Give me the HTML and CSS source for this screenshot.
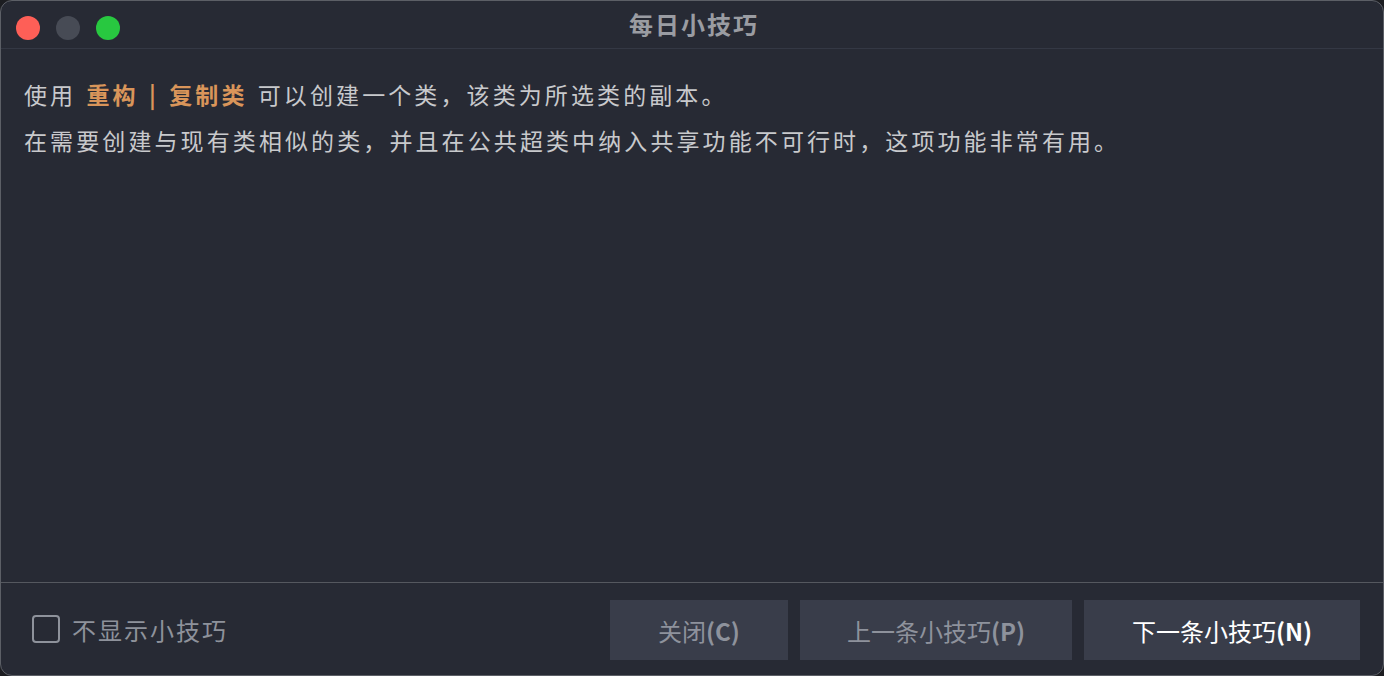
FILE: index.html
```html
<!DOCTYPE html>
<html lang="zh">
<head>
<meta charset="utf-8">
<link rel="stylesheet" href="styles.css">
</head>
<body>
<div class="window">
  <div class="titlebar">
    <div class="lights">
      <span class="light red"></span>
      <span class="light gray"></span>
      <span class="light green"></span>
    </div>
    <div class="title">每日小技巧</div>
  </div>
  <div class="content">
    <p>使用 <b class="hl">重构 | 复制类</b> 可以创建一个类，该类为所选类的副本。</p>
    <p>在需要创建与现有类相似的类，并且在公共超类中纳入共享功能不可行时，这项功能非常有用。</p>
  </div>
  <div class="footer">
    <label class="check"><span class="box"></span>不显示小技巧</label>
    <div class="buttons">
      <button class="btn w1">关闭<b>(C)</b></button>
      <button class="btn w2">上一条小技巧<b>(P)</b></button>
      <button class="btn w3 primary">下一条小技巧<b>(N)</b></button>
    </div>
  </div>
</div>
</body>
</html>
```

FILE: styles.css
```css
* { box-sizing: border-box; }
html, body { margin: 0; padding: 0; }
body {
  width: 1384px;
  height: 676px;
  background: #1c1d21;
  font-family: "Noto Sans CJK SC", "Noto Sans", sans-serif;
  overflow: hidden;
}
.window {
  width: 1384px;
  height: 676px;
  background: #272a34;
  border: 1px solid #5c5f66;
  border-radius: 12px;
  display: flex;
  flex-direction: column;
  overflow: hidden;
}
.titlebar {
  height: 48px;
  flex: 0 0 48px;
  position: relative;
  border-bottom: 1px solid #343844;
  display: flex;
  align-items: center;
  justify-content: center;
}
.lights {
  position: absolute;
  left: 15px;
  top: 15px;
  display: flex;
  gap: 16px;
}
.light {
  width: 24px;
  height: 24px;
  border-radius: 50%;
  display: block;
}
.red { background: #fe5f57; }
.gray { background: #474b55; }
.green { background: #28c840; }
.title {
  color: #9a9ca2;
  font-size: 24px;
  font-weight: 700;
  letter-spacing: 2px;
  margin-top: -2px;
  margin-right: -4px;
}
.content {
  flex: 1;
  padding: 22px 23px 0;
}
.content p {
  margin: 0;
  color: #c8c9cc;
  font-size: 23px;
  letter-spacing: 3.1px;
  word-spacing: 2px;
  line-height: 46px;
}
.hl { color: #d9955a; font-weight: 700; }
.footer {
  flex: 0 0 93px;
  border-top: 1px solid #55585f;
  display: flex;
  align-items: flex-start;
  justify-content: space-between;
  padding: 17px 23px 0 31px;
}
.check {
  display: flex;
  align-items: center;
  gap: 12px;
  color: #8e929b;
  font-size: 24px;
  letter-spacing: 2px;
  height: 60px;
  margin-top: -1px;
}
.box {
  width: 28px;
  height: 28px;
  border: 2.5px solid #8e929b;
  border-radius: 4px;
  display: block;
}
.buttons {
  display: flex;
  gap: 12px;
}
.btn {
  height: 60px;
  border: none;
  background: #393d4a;
  color: #8e929c;
  font-family: "Noto Sans CJK SC", "Noto Sans", sans-serif;
  font-size: 24px;
  padding: 0;
}
.btn b { font-weight: 700; }
.w1 { width: 178px; }
.w2 { width: 272px; }
.w3 { width: 276px; }
.primary { color: #ffffff; }
```
